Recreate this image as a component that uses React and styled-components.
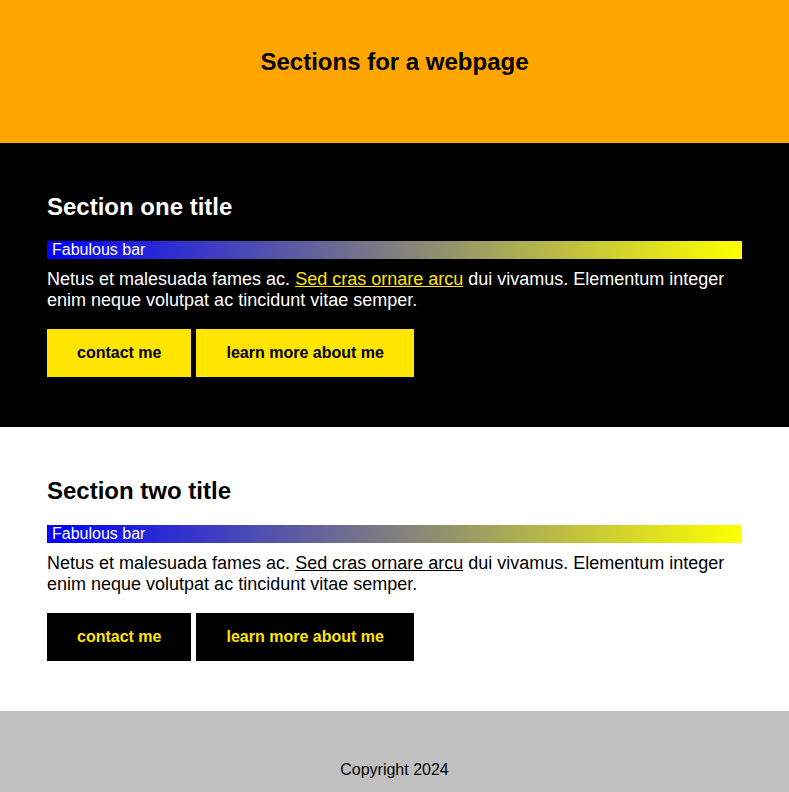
import styled, { createGlobalStyle } from "styled-components";

const GlobalStyle = createGlobalStyle`
    html, body {
        margin: 0;
        padding: 0;
        background: #fff;
        font-family: "Liberation Sans", Arial, Helvetica, sans-serif;
    }
    * {
        box-sizing: border-box;
    }
`;

const ACCENT = "#ffe500";

const Header = styled.header`
    height: 143px;
    background: #ffa500;
    padding-top: 48px;
    text-align: center;
`;

const PageTitle = styled.h1`
    margin: 0;
    font-size: 24px;
    line-height: 28px;
    font-weight: bold;
    color: #000;
`;

const Section = styled.section`
    padding: 50px 47px;
    background: ${(p) => (p.$dark ? "#000" : "#fff")};
    color: ${(p) => (p.$dark ? "#fff" : "#000")};
`;

const SectionTitle = styled.h2`
    margin: 0;
    font-size: 24px;
    line-height: 28px;
    font-weight: bold;
`;

const Bar = styled.div`
    margin-top: 20px;
    height: 18px;
    padding-left: 5px;
    background: linear-gradient(to right, #0000ff, #ffff00);
    color: #fff;
    font-size: 16px;
    line-height: 18px;
`;

const Text = styled.p`
    margin: 10px 0 0;
    font-size: 18px;
    line-height: 21px;

    a {
        color: ${(p) => (p.$dark ? ACCENT : "#000")};
        text-decoration: underline;
    }
`;

const Buttons = styled.div`
    display: flex;
    gap: 5px;
    margin-top: 18px;
`;

const Button = styled.button`
    border: none;
    padding: 15px 30px;
    font-family: inherit;
    font-size: 16px;
    line-height: 18px;
    font-weight: bold;
    cursor: pointer;
    background: ${(p) => (p.$dark ? ACCENT : "#000")};
    color: ${(p) => (p.$dark ? "#000" : ACCENT)};
`;

const Footer = styled.footer`
    background: #c0c0c0;
    padding: 50px 0 40px;
    text-align: center;
    font-size: 16px;
    line-height: 18px;
    color: #000;
`;

function PageSection({ dark, title }) {
    return (
        <Section $dark={dark}>
            <SectionTitle>{title}</SectionTitle>
            <Bar>Fabulous bar</Bar>
            <Text $dark={dark}>
                Netus et malesuada fames ac. <a href="#">Sed cras ornare arcu</a> dui vivamus.
                Elementum integer enim neque volutpat ac tincidunt vitae semper.
            </Text>
            <Buttons>
                <Button $dark={dark}>contact me</Button>
                <Button $dark={dark}>learn more about me</Button>
            </Buttons>
        </Section>
    );
}

export default function App() {
    return (
        <>
            <GlobalStyle />
            <Header>
                <PageTitle>Sections for a webpage</PageTitle>
            </Header>
            <PageSection dark title="Section one title" />
            <PageSection title="Section two title" />
            <Footer>Copyright 2024</Footer>
        </>
    );
}
